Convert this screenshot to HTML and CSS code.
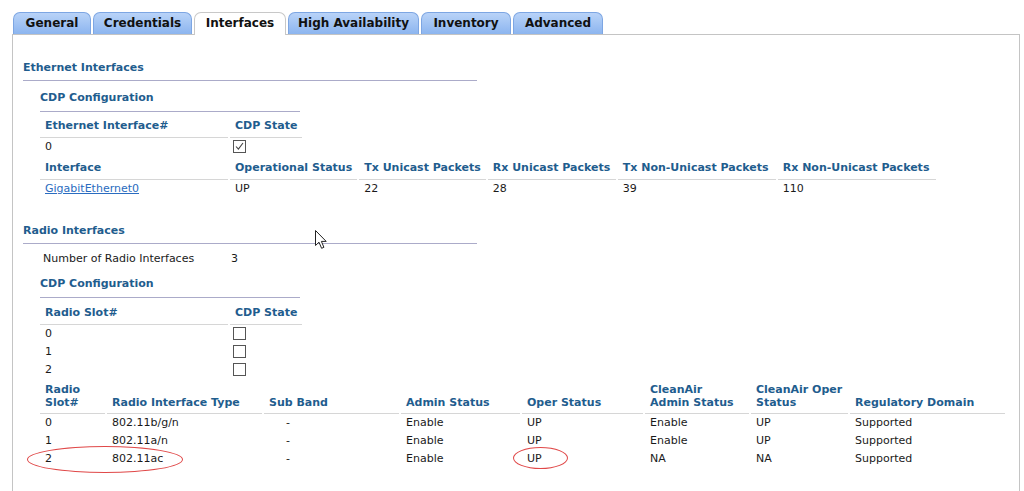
FILE: index.html
```html
<!DOCTYPE html>
<html>
<head>
<meta charset="utf-8">
<link rel="stylesheet" href="styles.css">
</head>
<body>
<div class="tabs">
  <div class="tab">General</div>
  <div class="tab">Credentials</div>
  <div class="tab active">Interfaces</div>
  <div class="tab">High Availability</div>
  <div class="tab">Inventory</div>
  <div class="tab">Advanced</div>
</div>
<div class="panel">
  <div class="section-title first">Ethernet Interfaces</div>
  <div class="sub-title">CDP Configuration</div>
  <table class="grid cdp">
    <tr class="head"><th class="c-wide">Ethernet Interface#</th><th class="c-cdp">CDP State</th></tr>
    <tr><td>0</td><td><span class="cb checked"><svg viewBox="0 0 12 12" width="11" height="11"><path d="M2.2 6 L4.8 8.8 L9.8 2.2" fill="none" stroke="#444" stroke-width="1.2"/></svg></span></td></tr>
  </table>
  <table class="grid eth">
    <tr class="head"><th class="c-wide">Interface</th><th class="w126">Operational Status</th><th class="w126">Tx Unicast Packets</th><th class="w128">Rx Unicast Packets</th><th class="w158">Tx Non-Unicast Packets</th><th class="w158">Rx Non-Unicast Packets</th></tr>
    <tr class="eth-row"><td><a href="#">GigabitEthernet0</a></td><td>UP</td><td>22</td><td>28</td><td>39</td><td>110</td></tr>
  </table>

  <div class="section-title radio">Radio Interfaces</div>
  <table class="grid num">
    <tr><td class="c-wide num-label">Number of Radio Interfaces</td><td>3</td></tr>
  </table>
  <div class="sub-title radio-cdp">CDP Configuration</div>
  <table class="grid cdp radio-slots">
    <tr class="head"><th class="c-wide">Radio Slot#</th><th class="c-cdp">CDP State</th></tr>
    <tr><td>0</td><td><span class="cb"></span></td></tr>
    <tr><td>1</td><td><span class="cb"></span></td></tr>
    <tr><td>2</td><td><span class="cb"></span></td></tr>
  </table>
  <table class="grid radios">
    <tr class="head two">
      <th class="r1">Radio<br>Slot#</th><th class="r2">Radio Interface Type</th><th class="r3">Sub Band</th><th class="r4">Admin Status</th><th class="r5">Oper Status</th><th class="r6">CleanAir<br>Admin Status</th><th class="r7">CleanAir Oper<br>Status</th><th class="r8">Regulatory Domain</th>
    </tr>
    <tr><td>0</td><td>802.11b/g/n</td><td class="dash">-</td><td>Enable</td><td>UP</td><td>Enable</td><td>UP</td><td>Supported</td></tr>
    <tr><td>1</td><td>802.11a/n</td><td class="dash">-</td><td>Enable</td><td>UP</td><td>Enable</td><td>UP</td><td>Supported</td></tr>
    <tr><td>2</td><td>802.11ac</td><td class="dash">-</td><td>Enable</td><td>UP</td><td>NA</td><td>NA</td><td>Supported</td></tr>
  </table>
</div>
<div class="ring ring-a"></div>
<div class="ring ring-b"></div>
<svg class="cursor" width="13" height="20" viewBox="0 0 13 20"><path d="M0.5 0.5 L0.5 15.5 L4 12.2 L6.6 18.3 L8.9 17.3 L6.4 11.4 L11.2 11.4 Z" fill="#fff" stroke="#222" stroke-width="1"/></svg>
</body>
</html>
```
FILE: styles.css
```css
html, body {
  margin: 0;
  padding: 0;
  background: #fff;
  height: 100%;
}
body {
  font-family: "DejaVu Sans", Verdana, sans-serif;
  font-size: 11px;
  color: #1a1a1a;
  position: relative;
  overflow: hidden;
}
.tabs {
  display: flex;
  gap: 2px;
  padding: 12px 0 0 13px;
  height: 22px;
  position: relative;
  z-index: 2;
}
.tab {
  box-sizing: border-box;
  height: 22px;
  line-height: 20px;
  padding: 0;
  font-weight: bold;
  font-size: 12px;
  color: #111;
  border: 1px solid #7da6e3;
  border-bottom: none;
  border-radius: 7px 7px 0 0;
  background: linear-gradient(#b9d3f8, #8cb5ef);
  text-align: center;
  white-space: nowrap;
}
.tab:nth-child(1) { width: 78px; }
.tab:nth-child(2) { width: 99px; }
.tab:nth-child(3) { width: 92px; }
.tab:nth-child(4) { width: 131px; }
.tab:nth-child(5) { width: 90px; }
.tab:nth-child(6) { width: 90px; }
.tab.active {
  background: #fff;
  border-color: #c8c8c8;
  height: 23px;
}
.panel {
  margin: 0 4px 0 12px;
  border: 1px solid #c4c4c4;
  border-bottom: none;
  height: 480px;
  padding-left: 10px;
  position: relative;
  z-index: 1;
}
.section-title {
  width: 454px;
  font-weight: bold;
  color: #1f5d8e;
  line-height: 16px;
  padding-bottom: 4px;
  border-bottom: 1px solid #ababc9;
}
.section-title.first { margin-top: 25px; }
.section-title.radio { margin-top: 26px; }
.sub-title {
  width: 260px;
  margin: 9px 0 0 17px;
  font-weight: bold;
  color: #1f5d8e;
  line-height: 16px;
  padding-bottom: 5px;
  border-bottom: 1px solid #ababc9;
}
.sub-title.radio-cdp { margin-top: 8px; }
.grid {
  border-collapse: separate;
  border-spacing: 2px 0;
  margin-left: 15px;
  table-layout: fixed;
}
.grid th {
  text-align: left;
  font-weight: bold;
  color: #1f5d8e;
  line-height: 16px;
  padding: 6px 5px 3px;
  border-bottom: 1px solid #d6d6d6;
  vertical-align: bottom;
  white-space: nowrap;
}
.grid td {
  padding: 0 5px;
  line-height: 18px;
  height: 18px;
  vertical-align: middle;
  white-space: nowrap;
}
.c-wide { width: 178px; }
.c-cdp { width: 60px; }
.w126 { width: 116px; }
.w128 { width: 118px; }
.w158 { width: 148px; }
.eth th { padding-top: 4px; }
.eth-row td { line-height: 17px; height: 17px; }
.eth a { color: #2a6cc0; }
.num { margin-top: 6px; }
.num td { padding-left: 3px; }
.radio-slots th { padding-top: 7px; }
.radios th { padding: 4px 5px 4px; line-height: 13px; }
.r1 { width: 55px; }
.r2 { width: 145px; }
.r3 { width: 125px; }
.r4 { width: 109px; }
.r5 { width: 111px; }
.r6 { width: 94px; }
.r7 { width: 87px; }
.r8 { width: 145px; }
.radios td.dash { padding-left: 22px; }
.cb {
  display: inline-block;
  box-sizing: border-box;
  width: 13px;
  height: 13px;
  border: 1px solid #555;
  background: #fff;
  vertical-align: middle;
  margin-left: -2px;
  position: relative;
  top: -1px;
}
.cb svg { display: block; }
.ring {
  position: absolute;
  border: 1px solid #e04848;
  border-radius: 50%;
  z-index: 3;
}
.ring-a { left: 27px; top: 446px; width: 154px; height: 25px; }
.ring-b { left: 513px; top: 447px; width: 53px; height: 20px; }
.cursor {
  position: absolute;
  left: 315px;
  top: 230px;
  z-index: 4;
}
```
